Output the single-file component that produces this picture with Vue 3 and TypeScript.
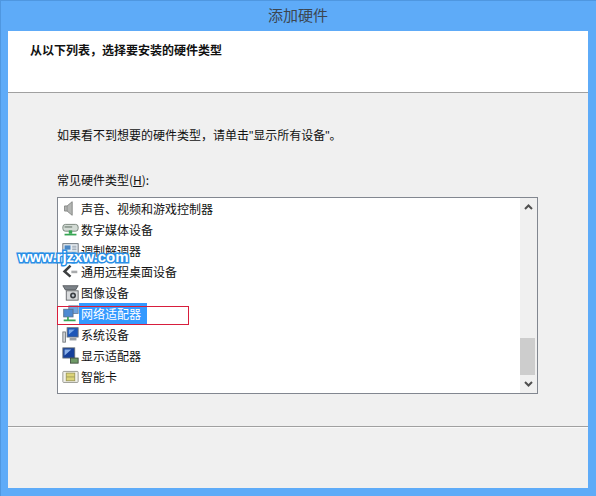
<script setup lang="ts">
const items = [
  { id: 'sound', label: '声音、视频和游戏控制器' },
  { id: 'media', label: '数字媒体设备' },
  { id: 'modem', label: '调制解调器' },
  { id: 'remote', label: '通用远程桌面设备' },
  { id: 'camera', label: '图像设备' },
  { id: 'network', label: '网络适配器', selected: true },
  { id: 'system', label: '系统设备' },
  { id: 'display', label: '显示适配器' },
  { id: 'card', label: '智能卡' },
]
</script>

<template>
  <div class="window">
    <div class="titlebar">添加硬件</div>
    <div class="client">
      <div class="header"><h1>从以下列表，选择要安装的硬件类型</h1></div>
      <div class="body">
        <p class="intro">如果看不到想要的硬件类型，请单击<span class="latin">"</span>显示所有设备<span class="latin">"</span>。</p>
        <p class="label">常见硬件类型(<u>H</u>):</p>
        <div class="listbox">
          <ul class="list">
            <li v-for="item in items" :key="item.id" class="row">
              <svg class="icon" viewBox="0 0 20 20">
                <template v-if="item.id === 'sound'">
                  <path d="M3 7h3l6-5v16l-6-5H3z" fill="#b4b6b4" stroke="#7c7e7c" />
                  <path d="M6 7v6" stroke="#8c8e8c" />
                </template>
                <template v-else-if="item.id === 'media'">
                  <rect x="1" y="4" width="18" height="8" rx="3" fill="#d3dbd5" stroke="#6d7a70" />
                  <rect x="3" y="6" width="9" height="2" fill="#8c9a90" />
                  <rect x="8" y="11" width="4" height="4" fill="#36a552" />
                  <rect x="3" y="15" width="14" height="2" fill="#36a552" />
                </template>
                <template v-else-if="item.id === 'modem'">
                  <rect x="1" y="2" width="18" height="15" fill="#e8eef3" stroke="#55606a" />
                  <rect x="3" y="4" width="7" height="5" fill="#4a86c4" />
                  <path d="M12 5h5M12 7h5M12 9h5M3 12h14M3 14h14" stroke="#8b98a5" />
                </template>
                <template v-else-if="item.id === 'remote'">
                  <path d="M10 3 3 10l7 6" fill="none" stroke="#3d3f40" stroke-width="3" />
                  <path d="M11 9h7v3h-7z" fill="#a8aaac" />
                </template>
                <template v-else-if="item.id === 'camera'">
                  <path d="M1 2h18l-3 5H4z" fill="#7c8288" stroke="#54585c" />
                  <rect x="5" y="8" width="14" height="11" fill="#d9dbdd" stroke="#5a5d60" />
                  <circle cx="13" cy="13.5" r="3.5" fill="#3d4145" />
                  <circle cx="13" cy="13.5" r="1.5" fill="#c5cdd4" />
                </template>
                <template v-else-if="item.id === 'network'">
                  <rect x="8" y="1" width="11" height="9" fill="#6fa3dd" stroke="#6a7f99" />
                  <rect x="2" y="5" width="11" height="9" fill="#4d8ad2" stroke="#55708f" />
                  <path d="M7 14v3M2 18h14" stroke="#3aa356" stroke-width="2" />
                </template>
                <template v-else-if="item.id === 'system'">
                  <rect x="1" y="7" width="3" height="12" fill="#d3d6d9" stroke="#6d7276" />
                  <rect x="6" y="2" width="13" height="11" fill="#1d56b8" stroke="#6a7076" />
                  <path d="M8 4h7l-7 6z" fill="#7ba9e8" />
                  <rect x="9" y="14" width="8" height="3" fill="#9aa0a6" />
                </template>
                <template v-else-if="item.id === 'display'">
                  <rect x="1" y="1" width="14" height="12" fill="#16409a" stroke="#6a7076" />
                  <path d="M3 3h8L3 10z" fill="#8bb0e8" />
                  <rect x="10" y="13" width="9" height="6" fill="#6f9a66" stroke="#3c4a3a" />
                </template>
                <template v-else>
                  <rect x="1" y="4" width="18" height="13" rx="1" fill="#f1f1ea" stroke="#8b8d85" />
                  <rect x="5" y="6" width="10" height="9" fill="#dcd477" stroke="#9a9654" />
                  <path d="M5 10.5h10" stroke="#9a9654" />
                </template>
              </svg>
              <span class="text" :class="{ selected: item.selected }">{{ item.label }}</span>
            </li>
          </ul>
          <div class="scrollbar">
            <svg class="arrow" width="9" height="6" viewBox="0 0 9 6"><path d="M1 5l3.5-3.5L8 5" fill="none" stroke="#505050" stroke-width="2" /></svg>
            <div class="track"><div class="thumb"></div></div>
            <svg class="arrow" width="9" height="6" viewBox="0 0 9 6"><path d="M1 1l3.5 3.5L8 1" fill="none" stroke="#505050" stroke-width="2" /></svg>
          </div>
        </div>
      </div>
      <div class="footer"></div>
    </div>
    <div class="highlight"></div>
    <div class="watermark">www.rjzxw.com</div>
  </div>
</template>

<style>
html, body { margin: 0; padding: 0; }
</style>

<style scoped>
.window {
  position: relative;
  box-sizing: border-box;
  width: 596px;
  height: 496px;
  padding: 0 8px 8px;
  display: flex;
  flex-direction: column;
  background: #5eabf8;
  box-shadow: inset 1px 1px 0 #4f97e0;
  overflow: hidden;
  font-family: "Noto Sans CJK SC", "Liberation Sans", sans-serif;
  color: #111;
}
.titlebar {
  height: 31px;
  flex: none;
  box-sizing: border-box;
  padding-bottom: 2px;
  display: flex;
  align-items: center;
  justify-content: center;
  font-size: 15px;
  color: #3c4650;
}
.client {
  flex: 1;
  display: flex;
  flex-direction: column;
  min-height: 0;
  background: #f0f0f0;
}
.header {
  box-sizing: border-box;
  height: 62px;
  flex: none;
  background: #fff;
  border-bottom: 1px solid #a0a0a0;
  padding: 11px 22px 0;
}
h1 {
  margin: 0;
  font-size: 12px;
  line-height: 16px;
  font-weight: 700;
  color: #111;
}
.body {
  box-sizing: border-box;
  height: 334px;
  flex: none;
  padding: 34px 49px 0;
  border-bottom: 1px solid #a0a0a0;
}
.intro, .label {
  margin: 0;
  font-size: 12px;
  line-height: 16px;
}
.latin {
  font-family: "Liberation Sans", sans-serif;
}
.label {
  margin-top: 28px;
}
.listbox {
  box-sizing: border-box;
  margin-top: 9px;
  width: 481px;
  height: 197px;
  display: flex;
  background: #fff;
  border: 1px solid #828790;
}
.list {
  flex: 1;
  margin: 0;
  padding: 0 0 0 4px;
  list-style: none;
}
.row {
  height: 21px;
  display: flex;
  align-items: center;
  font-size: 12px;
}
.icon {
  flex: none;
  width: 17px;
  height: 17px;
}
.text {
  padding: 0 2px;
  line-height: 21px;
  white-space: nowrap;
}
.text.selected {
  box-sizing: border-box;
  width: 68px;
  background: #3399ff;
  color: #fff;
}
.scrollbar {
  flex: none;
  width: 17px;
  display: flex;
  flex-direction: column;
  align-items: center;
  background: #f0f0f0;
}
.arrow {
  flex: none;
  margin: 6px 0;
}
.track {
  flex: 1;
  align-self: stretch;
  display: flex;
  flex-direction: column;
  justify-content: flex-end;
}
.thumb {
  height: 37px;
  width: 15px;
  background: #cdcdcd;
}
.footer {
  flex: 1;
  border-top: 1px solid #fafafa;
}
.highlight {
  position: absolute;
  left: 57px;
  top: 306px;
  width: 132px;
  height: 19px;
  box-sizing: border-box;
  border: 1px solid #d81e3c;
}
.watermark {
  position: absolute;
  left: 18px;
  top: 247px;
  font-family: "Liberation Sans", sans-serif;
  font-size: 15px;
  line-height: 20px;
  font-weight: 700;
  color: #fff;
  -webkit-text-stroke: 3px #2a8fe6;
  paint-order: stroke fill;
}
</style>
